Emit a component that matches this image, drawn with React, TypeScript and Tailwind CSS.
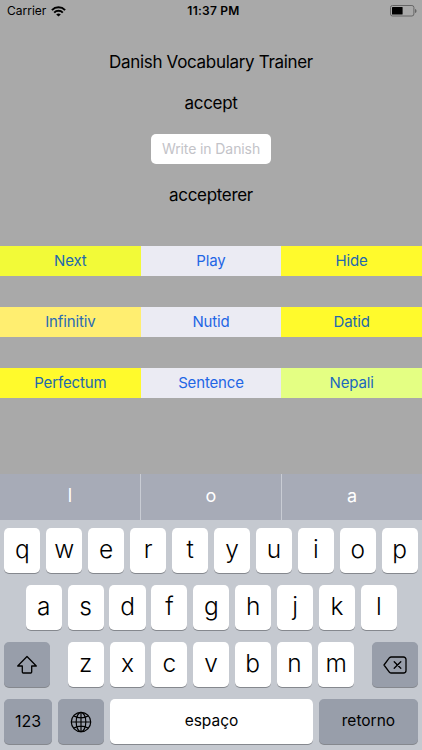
import { clsx } from 'clsx'

interface Action {
  label: string
  color: string
}

const actionRows: Action[][] = [
  [
    { label: 'Next', color: 'bg-[#f2fa38] text-[#2268ae]' },
    { label: 'Play', color: 'bg-[#ebebf3] text-[#1f66e5]' },
    { label: 'Hide', color: 'bg-[#fffa2c] text-[#2268ae]' },
  ],
  [
    { label: 'Infinitiv', color: 'bg-[#ffee70] text-[#2a6bb4]' },
    { label: 'Nutid', color: 'bg-[#ebebf3] text-[#1f66e5]' },
    { label: 'Datid', color: 'bg-[#fffa2c] text-[#2268ae]' },
  ],
  [
    { label: 'Perfectum', color: 'bg-[#fffa2c] text-[#2268ae]' },
    { label: 'Sentence', color: 'bg-[#ebebf3] text-[#1f66e5]' },
    { label: 'Nepali', color: 'bg-[#e4ff83] text-[#1b68be]' },
  ],
]

const suggestions = ['l', 'o', 'a']

function WifiIcon() {
  return (
    <svg width="15" height="11" viewBox="0 0 15 11" fill="none" stroke="#000" strokeWidth="2">
      <path d="M0.9 4.1a9.3 9.3 0 0 1 13.2 0" />
      <path d="M3.2 6.6a6.1 6.1 0 0 1 8.6 0" />
      <path d="M7.5 10.6 5.2 8.5a3.3 3.3 0 0 1 4.6 0Z" fill="#000" stroke="none" />
    </svg>
  )
}

function BatteryIcon() {
  return (
    <svg width="27" height="12" viewBox="0 0 27 12" fill="none">
      <rect x="0.5" y="0.5" width="23.4" height="10.5" rx="2" stroke="#666" />
      <rect x="2" y="2" width="10.6" height="7.5" rx="0.6" fill="#000" />
      <path d="M25 4v4c1-.4 1.5-1.1 1.5-2S26 4.4 25 4Z" fill="#666" />
    </svg>
  )
}

function ShiftIcon() {
  return (
    <svg width="22" height="20" viewBox="0 0 22 20" fill="none" stroke="#000" strokeWidth="1.3" strokeLinejoin="round">
      <path d="M11 1.5 20.3 11h-4.6v6c0 .7-.3 1-1 1H7.3c-.7 0-1-.3-1-1v-6H1.7Z" />
    </svg>
  )
}

function DeleteIcon() {
  return (
    <svg width="24" height="18" viewBox="0 0 24 18" fill="none" stroke="#000" strokeWidth="1.3" strokeLinejoin="round" strokeLinecap="round">
      <path d="M8.2 1h12.3A2.5 2.5 0 0 1 23 3.5v11a2.5 2.5 0 0 1-2.5 2.5H8.2c-.7 0-1.2-.2-1.7-.7L1 9l5.5-7.3C7 1.2 7.5 1 8.2 1Z" />
      <path d="m11.2 5.7 6.6 6.6M17.8 5.7l-6.6 6.6" />
    </svg>
  )
}

function GlobeIcon() {
  return (
    <svg width="22" height="22" viewBox="0 0 22 22" fill="none" stroke="#000" strokeWidth="1.2">
      <circle cx="11" cy="11" r="9.7" />
      <ellipse cx="11" cy="11" rx="4.8" ry="9.7" />
      <path d="M11 1.3v19.4M1.3 11h19.4M3.7 4.9c4.3 2.3 10.3 2.3 14.6 0M3.7 17.1c4.3-2.3 10.3-2.3 14.6 0" />
    </svg>
  )
}

function Key({ children, dark, className }: { children: React.ReactNode; dark?: boolean; className?: string }) {
  return (
    <button
      className={clsx(
        'flex h-[45.5px] items-center justify-center rounded-[5px] shadow-[0_1px_0_#85888e]',
        dark ? 'bg-[#989eaa]' : 'bg-white',
        className
      )}
    >
      {children}
    </button>
  )
}

function LetterKeys({ letters }: { letters: string }) {
  return (
    <>
      {letters.split('').map((letter) => (
        <Key key={letter} className="min-w-0 flex-1">
          <span className="pb-[3px] text-[24.5px] leading-none font-[350]">{letter}</span>
        </Key>
      ))}
    </>
  )
}

export default function App() {
  return (
    <div className="flex h-[750px] w-[422px] flex-col overflow-hidden bg-[#a9a9a9] font-['Inter','Liberation_Sans',sans-serif] text-black">
      {/* Status bar */}
      <header className="grid h-[22px] grid-cols-3 items-center pr-[5px] pl-[7px] text-[12px] leading-none">
        <div className="flex items-center gap-[5px]">
          <span>Carrier</span>
          <WifiIcon />
        </div>
        <span className="pl-[3px] text-center font-semibold tracking-[0.25px]">11:37 PM</span>
        <div className="flex justify-end">
          <BatteryIcon />
        </div>
      </header>

      {/* Word and answer */}
      <main className="flex flex-col items-center text-[17px] leading-[22px] tracking-[-0.32px]">
        <h1 className="mt-[29px]">Danish Vocabulary Trainer</h1>
        <p className="mt-[19px]">accept</p>
        <input
          className="mt-[19.5px] h-[30px] w-[120px] rounded-[5px] bg-white pb-px text-center text-[14px] tracking-[-0.1px] placeholder:text-[#c3c3c8]"
          placeholder="Write in Danish"
        />
        <p className="mt-[20.5px]">accepterer</p>
      </main>

      {/* Actions */}
      <section className="mt-[39.7px] flex flex-col gap-[30.5px]">
        {actionRows.map((row) => (
          <div key={row[0].label} className="grid h-[30.5px] grid-cols-3 text-[15px] tracking-[-0.15px]">
            {row.map((action) => (
              <button key={action.label} className={clsx('pt-px', action.color)}>
                {action.label}
              </button>
            ))}
          </div>
        ))}
      </section>

      {/* Keyboard */}
      <section className="mt-auto flex h-[276px] flex-col bg-[#c5c9d0]">
        <div className="flex h-[45.5px] shrink-0 divide-x divide-[#c9ccd4] bg-[#a7abb7] text-[18px] text-white">
          {suggestions.map((word) => (
            <button key={word} className="flex-1 pb-[3px]">
              {word}
            </button>
          ))}
        </div>
        <div className="flex flex-col gap-[11.5px] px-[4.3px] pt-[8.3px]">
          <div className="flex gap-[5.8px]">
            <LetterKeys letters="qwertyuiop" />
          </div>
          <div className="flex gap-[5.8px] pr-[20.8px] pl-[21.4px]">
            <LetterKeys letters="asdfghjkl" />
          </div>
          <div className="flex justify-between">
            <Key dark className="w-[46px]">
              <ShiftIcon />
            </Key>
            <div className="flex w-[286.5px] gap-[5.8px]">
              <LetterKeys letters="zxcvbnm" />
            </div>
            <Key dark className="w-[46px]">
              <DeleteIcon />
            </Key>
          </div>
          <div className="flex gap-[6px] text-[15.5px]">
            <Key dark className="w-[47.5px]">
              <span className="pb-px text-[16px]">123</span>
            </Key>
            <Key dark className="w-[46px]">
              <GlobeIcon />
            </Key>
            <Key className="flex-1">
              <span className="pb-[2px]">espaço</span>
            </Key>
            <Key dark className="w-[98.5px]">
              <span className="pb-[2px]">retorno</span>
            </Key>
          </div>
        </div>
      </section>
    </div>
  )
}
